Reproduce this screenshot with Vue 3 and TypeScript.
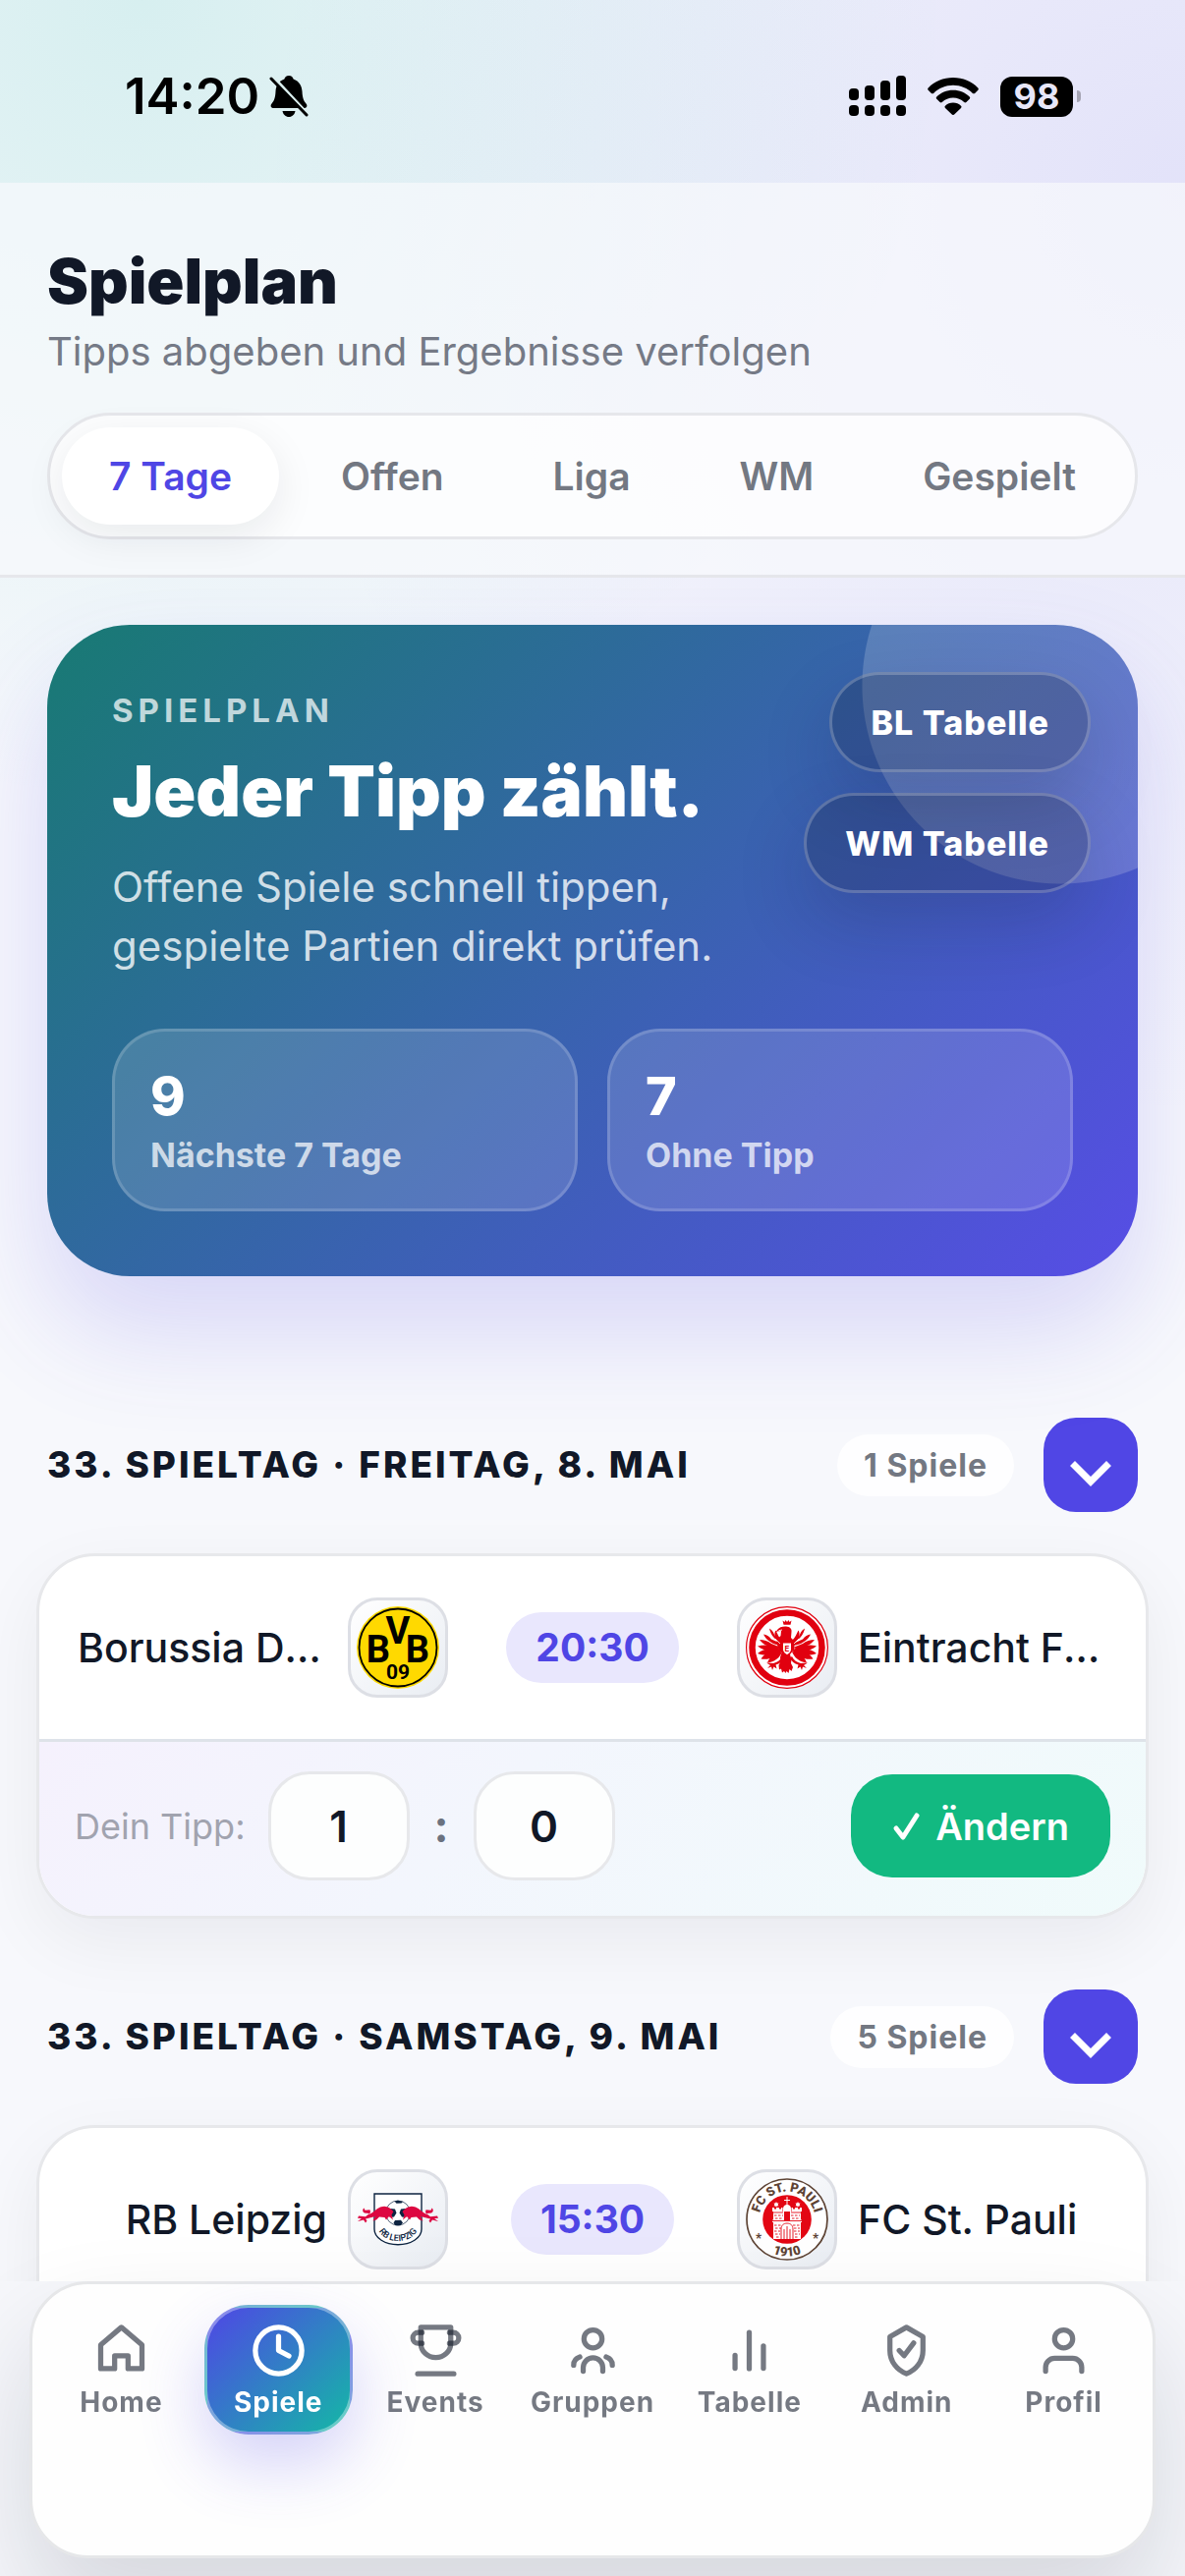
<script setup lang="ts">
import { ref } from 'vue'

interface Tip {
  home: string
  away: string
}

interface Match {
  home: string
  homeCrest: string
  away: string
  awayCrest: string
  time: string
  tip?: Tip
}

interface MatchDay {
  title: string
  count: number
  matches: Match[]
}

const tabs: string[] = ['7 Tage', 'Offen', 'Liga', 'WM', 'Gespielt']
const activeTab = ref<string>('7 Tage')

const stats = [
  { value: 9, label: 'Nächste 7 Tage' },
  { value: 7, label: 'Ohne Tipp' },
]

const days = ref<MatchDay[]>([
  {
    title: '33. Spieltag · Freitag, 8. Mai',
    count: 1,
    matches: [
      {
        home: 'Borussia Dortmund',
        homeCrest: 'bvb',
        away: 'Eintracht Frankfurt',
        awayCrest: 'sge',
        time: '20:30',
        tip: { home: '1', away: '0' },
      },
    ],
  },
  {
    title: '33. Spieltag · Samstag, 9. Mai',
    count: 5,
    matches: [
      { home: 'RB Leipzig', homeCrest: 'rbl', away: 'FC St. Pauli', awayCrest: 'stp', time: '15:30' },
    ],
  },
])

const bull =
  'M2 38.5l7 .8l4-3.3l-5-.5c-2-.8-2.500-3.500-.5-5l1 2.300l5-.6l.5 2.600l-1.500 2.200c4-1.600 7-5.500 11.500-7.500c6-2.300 10 .5 13.500 4.500l-2 3.500l1.500 5l-4-3.500l-3 3.500l-1.500-2.500l-5.500-.5l-3 3l-3.500 1l2.500-4.500l-10 2.500l1.500 2l-1.500 2l-2-3l-6 1.500l4-3l-4-.2z'

const navItems = [
  { label: 'Home', paths: ['M12 3l8 6.8V19h-5.4v-5H9.4v5H4V9.8z'] },
  { label: 'Spiele', paths: ['M12 3a9 9 0 1 0 0 18a9 9 0 1 0 0-18z', 'M12 6.5V12l4 2.1'] },
  {
    label: 'Events',
    paths: [
      'M6.2 3h11.600v6.200a5.800 5.500 0 0 1-11.600 0z',
      'M6.700 5H5.200a2.100 2.100 0 0 0 0 4.200h1.500',
      'M17.300 5h1.500a2.100 2.100 0 0 1 0 4.200h-1.500',
      'M5 21h14',
    ],
  },
  {
    label: 'Gruppen',
    paths: [
      'M12 4a3.500 3.500 0 1 0 0 7a3.500 3.500 0 1 0 0-7z',
      'M8.200 20v-1.400a3.800 3.800 0 0 1 7.600 0V20',
      'M6.900 14.500c-1.600.5-2.400 1.700-2.400 3.200',
      'M17.100 14.500c1.600.5 2.400 1.700 2.400 3.200',
    ],
  },
  { label: 'Tabelle', paths: ['M6.500 13.900v5', 'M12 5v14', 'M17.500 10.200v8.700'] },
  {
    label: 'Admin',
    paths: ['M12 3l6.400 3.700V12c0 4.200-2.700 7.600-6.400 9c-3.700-1.400-6.400-4.800-6.400-9V6.700z', 'M9.200 12l1.900 2l3.700-4.900'],
  },
  {
    label: 'Profil',
    paths: ['M12 4a3.500 3.500 0 1 0 0 7a3.500 3.500 0 1 0 0-7z', 'M5 20v-1.500a3.500 3.500 0 0 1 3.500-3.500h7a3.500 3.500 0 0 1 3.500 3.500V20'],
  },
]
const activeNav = ref<string>('Spiele')
</script>

<template>
  <div class="app">
    <div class="status">
      <span class="clock">14:20</span>
      <svg class="bell" viewBox="0 0 40 42" aria-hidden="true">
        <path d="M20 0c2.600 0 4.200 1.600 4.600 3.600c6 2 8.600 7 8.900 12.400c.3 6.500 1.500 9.500 4 12.500c1.800 2.200.8 4.500-2 4.500H4.500c-2.800 0-3.800-2.300-2-4.500c2.500-3 3.700-6 4-12.500c.3-5.400 2.900-10.400 8.900-12.400C15.800 1.600 17.400 0 20 0z" />
        <path d="M13.500 36h13c-.6 3.600-3.200 6-6.500 6s-5.900-2.400-6.500-6z" />
        <path class="bell-gap" d="M3 0L41 41" />
        <path class="bell-line" d="M2 3L38 40" />
      </svg>
      <span class="spacer"></span>
      <svg class="signal" viewBox="0 0 58 42" aria-hidden="true">
        <rect x="0" y="13" width="10" height="12" rx="4" />
        <rect x="16" y="10" width="10" height="15" rx="4" />
        <rect x="32" y="5" width="10" height="20" rx="4" />
        <rect x="48" y="0" width="10" height="25" rx="4" />
        <rect v-for="n in 4" :key="n" :x="(n - 1) * 16" y="30" width="10" height="11" rx="4" />
      </svg>
      <svg class="wifi" viewBox="0 0 52 38" aria-hidden="true">
        <path d="M26 0c10 0 19 4 25.300 10.400c.7.7.7 1.600 0 2.300l-3.200 3.200c-.6.6-1.500.6-2.200 0C40.700 10.800 33.700 7.800 26 7.800S11.300 10.800 6.100 15.900c-.7.6-1.600.6-2.200 0L.7 12.700c-.7-.7-.7-1.600 0-2.300C7 4 16 0 26 0z" />
        <path d="M26 12.800c6.600 0 12.500 2.600 16.700 6.700c.7.7.7 1.600 0 2.300l-3.300 3.200c-.6.6-1.500.6-2.200.1C34.200 22.300 30.300 20.600 26 20.600s-8.200 1.700-11.200 4.500c-.7.5-1.600.5-2.200-.1l-3.300-3.200c-.7-.7-.7-1.600 0-2.300c4.200-4.100 10.100-6.700 16.700-6.700z" />
        <path d="M26 25.600c3.100 0 5.900 1.200 8 3.100c.7.7.7 1.600 0 2.300l-6.800 6.500c-.7.7-1.700.7-2.400 0L18 31c-.7-.7-.7-1.600 0-2.300c2.100-1.900 4.900-3.100 8-3.100z" />
      </svg>
      <span class="battery">98</span>
      <span class="battery-nub"></span>
    </div>

    <header class="header">
      <h1>Spielplan</h1>
      <p>Tipps abgeben und Ergebnisse verfolgen</p>
      <nav class="tabs" aria-label="Filter">
        <button
          v-for="tab in tabs"
          :key="tab"
          type="button"
          :class="{ active: tab === activeTab }"
          @click="activeTab = tab"
        >
          {{ tab }}
        </button>
      </nav>
    </header>

    <main>
      <section class="hero">
        <div class="hero-top">
          <div class="hero-copy">
            <span class="eyebrow">SPIELPLAN</span>
            <h2>Jeder Tipp zählt.</h2>
            <p>Offene Spiele schnell tippen, gespielte Partien direkt prüfen.</p>
          </div>
          <div class="hero-actions">
            <button type="button">BL Tabelle</button>
            <button type="button">WM Tabelle</button>
          </div>
        </div>
        <div class="stats">
          <div v-for="stat in stats" :key="stat.label" class="stat">
            <strong>{{ stat.value }}</strong>
            <span>{{ stat.label }}</span>
          </div>
        </div>
      </section>

      <section v-for="day in days" :key="day.title" class="day">
        <div class="day-head">
          <h3>{{ day.title }}</h3>
          <span class="count">{{ day.count }} Spiele</span>
          <button type="button" class="toggle" aria-label="Spieltag einklappen">
            <svg viewBox="0 0 48 48" aria-hidden="true"><path d="M5.500 22.500L24 41L42.500 22.500" /></svg>
          </button>
        </div>

        <article v-for="match in day.matches" :key="match.home" class="match">
          <div class="match-row">
            <div class="team home">
              <span class="name">{{ match.home }}</span>
              <span class="crest">
                <svg v-if="match.homeCrest === 'bvb'" viewBox="0 0 84 84" aria-hidden="true">
                  <circle cx="42" cy="42" r="42" fill="#ffd900" />
                  <circle cx="42" cy="42" r="39.500" fill="none" stroke="#000" stroke-width="1.800" />
                  <g class="bvb-text">
                    <text x="22" y="57" font-size="38">B</text>
                    <text x="42" y="38" font-size="38">V</text>
                    <text x="62" y="57" font-size="38">B</text>
                    <text x="42" y="74" font-size="21">09</text>
                  </g>
                </svg>
                <svg v-else viewBox="0 0 84 84" aria-hidden="true">
                  <path d="M18 16h48v36c0 9-11 15.700-24 15.700S18 61 18 52z" fill="#fff" stroke="#0c2340" stroke-width="1.400" />
                  <circle cx="42" cy="35.500" r="12.500" fill="#fff" stroke="#0c2340" stroke-width=".7" />
                  <path d="M38.500 23.500l3.500-.8l5 1.300l-1.500 1.500l-5 .3zM34 31l5 .5l1.500 4l-2.500 4l-4 .5l-2.500-4zM50 31l-5 .5l-1.500 4l2.500 4l4 .5l2.500-4zM39 43l6-.3l2 2.800l-2.500 2.700l-5 0l-2-2.500z" fill="#0c2340" />
                  <path :d="bull" fill="#dd0741" />
                  <path :d="bull" fill="#dd0741" transform="matrix(-1 0 0 1 84 0)" />
                  <path id="rbl-arc" d="M21.500 51C27 68.500 57 68.500 62.500 51" fill="none" />
                  <text class="rbl-text"><textPath href="#rbl-arc" startOffset="50%">RB LEIPZIG</textPath></text>
                </svg>
              </span>
            </div>
            <div class="kickoff"><time>{{ match.time }}</time></div>
            <div class="team">
              <span class="crest">
                <svg v-if="match.awayCrest === 'sge'" viewBox="0 0 84 84" aria-hidden="true">
                  <circle cx="42" cy="42" r="41.400" fill="#fff" stroke="#e1000f" stroke-width="1.200" />
                  <circle cx="42" cy="42" r="35.500" fill="none" stroke="#e1000f" stroke-width="6.500" />
                  <g fill="#e1000f">
                    <path d="M37.500 14.500l2 1.500l1-2l1.500 2l1.500-2l1 2l2-1.500l-1 4.300h-7z" />
                    <path d="M32 24c2-2.600 5-3.600 9-3.400c4 .3 6 2.400 5.500 5.400l-.5 6l4 4l-1 8l-4 5l1.500 5l-.5 4l2 4l-1.500 4l-2-2l-1 4l-2-2l-1 2l-1.500-2l-2 1.500l-1-4l-2 1l-.5-4.500l2-4l-.5-4l1.500-5l-4-5l-1-8l4-4l.5-5l-4 .5l-2 1.500z" />
                    <g v-for="side in [1, -1]" :key="side" :transform="`matrix(${side} 0 0 1 ${side === 1 ? 0 : 84} 0)`">
                      <path d="M36 38C30 34 25 29 24 22.500c3.500 2 5 5 5.500 8.500c0 0-.5-5 1-6.500c2 3.500 3 7.500 6.500 10.500z" />
                      <path d="M36 40C28 39 21 35 18 28.500c3 .5 6 2 8 5l9 4z" />
                      <path d="M36 42C27 43 18 40 14 34c4 0 9 1.500 12 4z" />
                      <path d="M36 43c-8 3.500-18 3-24-2.500c5-1.500 12-1.500 17 .5z" />
                      <path d="M36 44c-6 5-15 7.500-24 4c4-4 11-5.500 17-4.500z" />
                      <path d="M37 44c-4 7-13 11-21.500 9.500c3-5 8.500-8 15-9z" />
                      <path d="M37 46c-2 6-8 11-15 11.500c2-5.500 6-9 11-11z" />
                      <path d="M37 51c-2 4-5 6-9 7l-7-.5l4 2.500l-3 3l4-1.500l1 3.500l1.500-3.500l3 2l-1-4c4-1 7-3.500 8.500-7z" />
                    </g>
                  </g>
                  <path d="M38 37.500h8v6.500c0 3-4 5-4 5s-4-2-4-5z" fill="#fff" />
                  <path d="M33.500 24.700l3.500-.7" stroke="#fff" stroke-width=".9" />
                  <path d="M30 33l5 5M54 33l-5 5" stroke="#fff" stroke-width=".8" />
                  <text class="sge-text" x="42" y="46">E</text>
                </svg>
                <svg v-else viewBox="0 0 84 84" aria-hidden="true">
                  <circle cx="42" cy="42" r="41" fill="#fff" stroke="#5d4334" stroke-width="1.700" />
                  <circle cx="42" cy="42" r="24.800" fill="#e30613" />
                  <g fill="#fff">
                    <path d="M41.500 19h1v3h2.500v1h-2.500v4.500h-1V23H39v-1h2.500z" />
                    <path d="M38 34v-3c0-2.500 2-4 4-4s4 1.500 4 4v3z" />
                    <path d="M27 30h2v1.500h2V30h3v1.500h2V30h1.500v4H39v9h6v-9h1.500v-4H48v1.500h2V30h3v1.500h2V30h2v4h-1v8.500h1v2.500h-1v17H28V45h-1v-2.500h1V34h-1z" />
                    <path d="M31 24l.8 1.500l1.700-.1l-.9 1.500l.9 1.500l-1.700-.1l-.8 1.500l-.8-1.500l-1.700.1l.9-1.500l-.9-1.500l1.700.1z" />
                    <path d="M53 24l.8 1.500l1.700-.1l-.9 1.500l.9 1.500l-1.700-.1l-.8 1.500l-.8-1.500l-1.700.1l.9-1.500l-.9-1.500l1.700.1z" />
                  </g>
                  <g fill="none" stroke="#e30613" stroke-width=".9">
                    <path d="M36 63V52c0-4 2.500-6 6-6s6 2 6 6v11M39 63V52M42 63V49M45 63V52" />
                    <path d="M27 35h11M46 35h11M27 43.500h30" />
                    <path stroke-dasharray="2.500 1.500" d="M29 38h9M46 38h9M30 41h8M47 41h8M29 48h7M48 48h7M30 51h6M49 51h6M29 54h6M49 54h6M30 57h5M50 57h5M31 60h4M50 60h4" />
                  </g>
                  <path id="stp-top" d="M13.500 42a28.500 28.500 0 0 1 57 0" fill="none" />
                  <path id="stp-bottom" d="M4.500 42a37.500 37.500 0 0 0 75 0" fill="none" />
                  <g class="stp-text">
                    <text><textPath href="#stp-top" startOffset="50%">FC ST. PAULI</textPath></text>
                    <text><textPath href="#stp-bottom" startOffset="50%">1910</textPath></text>
                    <text x="13" y="65">*</text>
                    <text x="71" y="65">*</text>
                  </g>
                </svg>
              </span>
              <span class="name">{{ match.away }}</span>
            </div>
          </div>
          <form v-if="match.tip" class="tip-row" @submit.prevent>
            <label for="tip-home">Dein Tipp:</label>
            <input id="tip-home" v-model="match.tip.home" type="text" inputmode="numeric" />
            <span class="colon">:</span>
            <input v-model="match.tip.away" type="text" inputmode="numeric" aria-label="Tipp Auswärtsteam" />
            <button type="submit">
              <svg viewBox="0 0 30 30" aria-hidden="true"><path d="M4 17l7 9L25 4" /></svg>
              Ändern
            </button>
          </form>
        </article>
      </section>
    </main>

    <div class="dock">
      <nav class="dock-card" aria-label="Hauptnavigation">
        <a
          v-for="item in navItems"
          :key="item.label"
          href="#"
          :class="{ active: item.label === activeNav }"
          @click.prevent="activeNav = item.label"
        >
          <svg viewBox="0 0 24 24" aria-hidden="true">
            <path v-for="d in item.paths" :key="d" :d="d" />
          </svg>
          <span>{{ item.label }}</span>
        </a>
      </nav>
    </div>
  </div>
</template>

<style>
body {
  margin: 0;
  background: #f7f8fc;
}
</style>

<style scoped>
* {
  box-sizing: border-box;
}

.app {
  min-height: 100vh;
  font-family: Inter, "Liberation Sans", sans-serif;
  color: #111827;
  background:
    radial-gradient(circle at 12% 0, rgba(20, 184, 166, 0.14), transparent 68vw),
    radial-gradient(circle at 100% 200px, rgba(79, 70, 229, 0.12), transparent 78vw),
    #f7f8fc;
}

h1,
h2,
h3,
p {
  margin: 0;
}

button,
input {
  margin: 0;
  padding: 0;
  border: 0;
  font: inherit;
  color: inherit;
}

.status {
  display: flex;
  align-items: center;
  height: 186px;
  padding: 10px 106px 0 127px;
  color: #000;
}

.clock {
  font-size: 51px;
  font-weight: 600;
  line-height: 60px;
}

.bell {
  width: 40px;
  height: 42px;
  margin-left: 10px;
}

.bell-gap {
  fill: none;
  stroke: #dcf0f0;
  stroke-width: 3;
}

.bell-line {
  fill: none;
  stroke: #000;
  stroke-width: 3;
  stroke-linecap: round;
}

.spacer {
  flex: 1;
}

.signal {
  width: 58px;
  height: 42px;
}

.wifi {
  width: 52px;
  height: 38px;
  margin: 0 22px;
}

.battery {
  width: 74px;
  height: 41px;
  border-radius: 12px;
  background: #000;
  color: #e7e6f8;
  font-size: 36px;
  font-weight: 700;
  line-height: 41px;
  text-align: center;
}

.battery-nub {
  width: 4px;
  height: 12px;
  margin-left: 4px;
  border-radius: 0 4px 4px 0;
  background: #a5a4b3;
}

.header {
  padding: 64px 48px 36px;
  border-bottom: 3px solid #e6e7eb;
  background: rgba(248, 249, 252, 0.7);
}

.header h1 {
  font-size: 63px;
  font-weight: 900;
  line-height: 72px;
}

.header p {
  margin-top: 12px;
  font-size: 40px;
  line-height: 48px;
  color: #757a86;
}

.tabs {
  display: flex;
  justify-content: space-between;
  margin-top: 38px;
  padding: 12px;
  border: 3px solid #e6e7eb;
  border-radius: 66px;
  background: rgba(255, 255, 255, 0.7);
}

.tabs button {
  height: 99px;
  padding: 0 48px;
  border-radius: 50px;
  background: none;
  color: #737882;
  font-size: 39px;
  font-weight: 600;
}

.tabs button.active {
  background: #fff;
  color: #4f46e5;
  box-shadow: 0 12px 42px rgba(15, 23, 42, 0.08);
}

.hero {
  position: relative;
  margin: 48px 48px 144px;
  padding: 48px 48px 66px 66px;
  border-radius: 84px;
  background: linear-gradient(135deg, #187a73, #574de6);
  box-shadow: 0 54px 108px rgba(79, 70, 229, 0.19);
  color: #fff;
}

.hero::before {
  content: "";
  position: absolute;
  inset: 0;
  border-radius: 84px;
  background: radial-gradient(circle at calc(100% - 79px) 62px, rgba(255, 255, 255, 0.18) 201px, transparent 202px);
}

.hero-top,
.stats {
  position: relative;
  display: flex;
}

.hero-copy {
  flex: 1;
  padding-top: 18px;
}

.eyebrow {
  display: block;
  font-size: 33px;
  font-weight: 700;
  line-height: 42px;
  letter-spacing: 5px;
  color: rgba(255, 255, 255, 0.72);
}

.hero h2 {
  margin-top: 21px;
  font-size: 71px;
  font-weight: 900;
  line-height: 80px;
}

.hero p {
  margin-top: 28px;
  font-size: 42px;
  line-height: 60px;
  color: rgba(255, 255, 255, 0.78);
}

.hero-actions {
  display: flex;
  flex-direction: column;
  align-items: flex-end;
  gap: 21px;
}

.hero-actions button {
  height: 102px;
  padding: 0 39px;
  border: 3px solid rgba(255, 255, 255, 0.22);
  border-radius: 51px;
  background: rgba(15, 23, 42, 0.24);
  box-shadow: 0 30px 72px rgba(15, 23, 42, 0.18);
  font-size: 34px;
  font-weight: 800;
  letter-spacing: 1px;
}

.stats {
  gap: 30px;
  margin: 54px 18px 0 0;
}

.stat {
  flex: 1;
  padding: 36px 36px 33px;
  border: 3px solid rgba(255, 255, 255, 0.16);
  border-radius: 54px;
  background: rgba(255, 255, 255, 0.14);
}

.stat strong {
  display: block;
  font-size: 54px;
  font-weight: 800;
  line-height: 60px;
}

.stat span {
  display: block;
  margin-top: 9px;
  font-size: 34px;
  font-weight: 700;
  line-height: 42px;
  color: rgba(255, 255, 255, 0.72);
}

.day {
  margin-bottom: 72px;
}

.day-head {
  display: flex;
  align-items: center;
  padding: 0 48px;
}

.day-head h3 {
  flex: 1;
  font-size: 37px;
  font-weight: 800;
  line-height: 48px;
  letter-spacing: 3px;
  text-transform: uppercase;
}

.count {
  padding: 0 27px;
  border-radius: 33px;
  background: rgba(255, 255, 255, 0.86);
  color: #737882;
  font-size: 32px;
  font-weight: 700;
  line-height: 63px;
  letter-spacing: 1px;
}

.toggle {
  display: flex;
  align-items: center;
  justify-content: center;
  width: 96px;
  height: 96px;
  margin-left: 30px;
  border-radius: 33px;
  background: #5046e5;
}

.toggle svg {
  width: 48px;
  height: 48px;
  fill: none;
  stroke: #fff;
  stroke-width: 7;
}

.match {
  min-height: 372px;
  margin: 42px 37px 0;
  overflow: hidden;
  border: 3px solid #e7e8eb;
  border-radius: 60px;
  background: #fff;
  box-shadow: 0 24px 72px rgba(15, 23, 42, 0.06);
}

.match-row {
  display: grid;
  grid-template-columns: minmax(0, 1fr) 294px minmax(0, 1fr);
  align-items: center;
  padding: 42px 39px;
}

.team {
  display: flex;
  align-items: center;
  gap: 21px;
}

.team.home {
  justify-content: flex-end;
}

.name {
  overflow: hidden;
  font-size: 41px;
  font-weight: 500;
  line-height: 54px;
  text-overflow: ellipsis;
  white-space: nowrap;
}

.crest {
  display: flex;
  flex: none;
  align-items: center;
  justify-content: center;
  width: 102px;
  height: 102px;
  border: 3px solid #dddfe5;
  border-radius: 30px;
  background: linear-gradient(135deg, #fff, #e9edf3);
}

.crest svg {
  width: 84px;
  height: 84px;
}

.bvb-text {
  font-family: Roboto, sans-serif;
  font-weight: 700;
  text-anchor: middle;
}

.rbl-text {
  fill: #0c2340;
  font-family: Roboto, sans-serif;
  font-size: 9px;
  font-weight: 500;
  text-anchor: middle;
}

.sge-text {
  fill: #e1000f;
  font-size: 8px;
  font-weight: 700;
  text-anchor: middle;
}

.stp-text {
  fill: #5d4334;
  font-family: Roboto, sans-serif;
  font-size: 13px;
  font-weight: 900;
  text-anchor: middle;
}

.kickoff {
  display: flex;
  justify-content: center;
}

.kickoff time {
  padding: 0 30px;
  border-radius: 36px;
  background: #e9e7fd;
  color: #4f46e5;
  font-size: 39px;
  font-weight: 700;
  line-height: 72px;
}

.tip-row {
  display: flex;
  align-items: center;
  gap: 23px;
  padding: 30px 36px 36px;
  border-top: 3px solid #dee3e9;
  background: linear-gradient(135deg, #f5f1fd, #f3f6fd 40%, #f0fbfb);
}

.tip-row label {
  color: #a1a3af;
  font-size: 36px;
}

.tip-row input {
  width: 144px;
  height: 111px;
  border: 3px solid #e7e8eb;
  border-radius: 42px;
  background: #fdfefe;
  font-size: 44px;
  font-weight: 600;
  text-align: center;
}

.colon {
  padding: 0 2px;
  color: #6b7280;
  font-size: 45px;
  font-weight: 700;
}

.tip-row button {
  display: flex;
  align-items: center;
  gap: 14px;
  height: 105px;
  margin-left: auto;
  padding: 0 42px;
  border-radius: 42px;
  background: #12b981;
  color: #fff;
  font-size: 38px;
  font-weight: 600;
}

.tip-row button svg {
  width: 30px;
  height: 30px;
  fill: none;
  stroke: #fff;
  stroke-width: 5;
  stroke-linecap: round;
  stroke-linejoin: round;
}

.dock {
  position: fixed;
  right: 0;
  bottom: 0;
  left: 0;
  padding: 0 30px 18px;
  background: #f6f7fb;
}

.dock-card {
  display: flex;
  align-items: flex-start;
  gap: 9px;
  height: 282px;
  padding: 21px 15px;
  border: 3px solid #e6e7e9;
  border-radius: 60px;
  background: #fefefe;
  box-shadow: 0 54px 108px rgba(15, 23, 42, 0.14);
}

.dock-card a {
  display: flex;
  flex: 1 1 0;
  flex-direction: column;
  align-items: center;
  gap: 3px;
  min-width: 0;
  padding: 12px 0;
  border: 3px solid transparent;
  border-radius: 45px;
  color: rgba(17, 24, 39, 0.58);
  font-size: 28px;
  font-weight: 700;
  line-height: 36px;
  letter-spacing: 1px;
  text-decoration: none;
}

.dock-card a.active {
  border-color: rgba(255, 255, 255, 0.35);
  background-image: linear-gradient(135deg, #4f46e5, #14b8a6);
  box-shadow: 0 30px 66px rgba(79, 70, 229, 0.24);
  color: #fff;
}

.dock-card svg {
  width: 63px;
  height: 63px;
  fill: none;
  stroke: currentColor;
  stroke-width: 2;
  stroke-linecap: round;
  stroke-linejoin: round;
}
</style>
